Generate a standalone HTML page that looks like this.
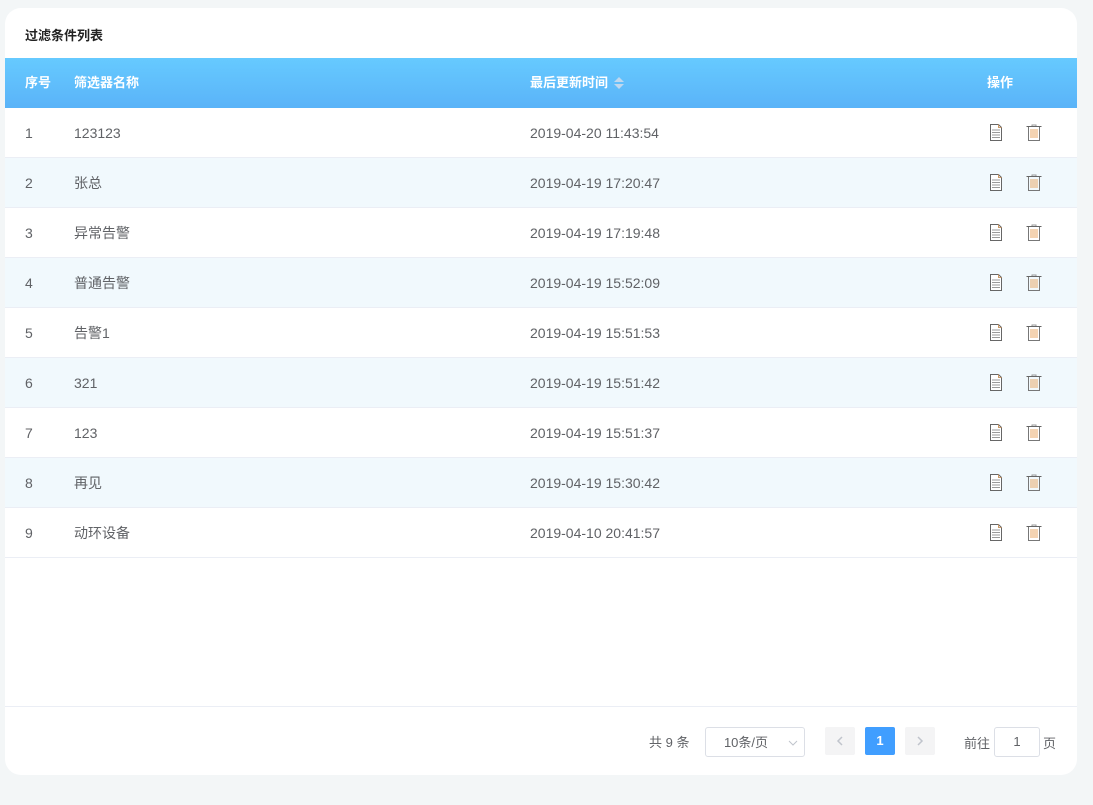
<!DOCTYPE html>
<html><head><meta charset="utf-8"><style>
*{margin:0;padding:0;box-sizing:border-box}
body{width:1093px;height:805px;background:#f3f6f7;font-family:"Liberation Sans","Noto Sans CJK SC",sans-serif;font-size:14px;color:#606266;position:relative;overflow:hidden}
.card{position:absolute;left:5px;top:8px;width:1072px;height:767px;background:#fff;border-radius:16px;overflow:hidden}
.title{position:absolute;left:20px;top:17px;font-size:13px;font-weight:bold;color:#222}
.head{position:absolute;left:0;top:50px;width:1072px;height:50px;background:linear-gradient(#66caff,#5ab3f8);color:#fff;font-weight:bold;font-size:13px}
.head span,.row span{position:absolute;top:0;line-height:50px}
.row{position:absolute;left:0;width:1072px;height:50px;border-bottom:1px solid #ebeef5}
.row.s{background:#f1f9fd}
.c1{left:20px}.c2{left:69px}.c3{left:525px}.c4{left:982px}
.ic{position:absolute;top:16px}
.sort{display:inline-block;vertical-align:middle;margin-left:6px;width:10px;height:14px;position:relative;top:-1px}
.sort:before{content:"";position:absolute;left:0;top:1px;border:5px solid transparent;border-top:0;border-bottom:5px solid #c0d8ee}
.sort:after{content:"";position:absolute;left:0;top:8px;border:5px solid transparent;border-bottom:0;border-top:5px solid #c0d8ee}
.foot{position:absolute;left:0;top:698px;width:1072px;border-top:1px solid #ebeef5}
.pg{position:absolute;font-size:13px;color:#606266}
.box{position:absolute;border:1px solid #dcdfe6;border-radius:3px;background:#fff;text-align:center;font-size:13px}
.btn{position:absolute;width:30px;height:28px;background:#f4f4f5;border-radius:2px;color:#c0c4cc;text-align:center;line-height:28px}
.btn svg{position:absolute;left:11px;top:9px}
</style></head><body>
<div class="card">
<div class="title">过滤条件列表</div>
<div class="head"><span class="c1">序号</span><span class="c2">筛选器名称</span><span class="c3">最后更新时间<i class="sort"></i></span><span class="c4">操作</span></div>
<div id="rows"></div>
<div class="foot"></div>
<div class="pg" style="left:644px;top:724px">共 9 条</div>
<div class="box" style="left:700px;top:719px;width:100px;height:30px;line-height:30px;padding-right:18px">10条/页<svg style="position:absolute;right:6px;top:12px" width="10" height="6"><path d="M1 1l4 4 4-4" fill="none" stroke="#c0c4cc"/></svg></div>
<div class="btn" style="left:820px;top:719px"><svg width="8" height="10"><path d="M6 1L2 5l4 4" fill="none" stroke="#c0c4cc" stroke-width="1.5"/></svg></div>
<div class="btn" style="left:860px;top:719px;background:#409eff;color:#fff;font-weight:bold;font-size:13px">1</div>
<div class="btn" style="left:900px;top:719px"><svg width="8" height="10"><path d="M2 1l4 4-4 4" fill="none" stroke="#c0c4cc" stroke-width="1.5"/></svg></div>
<div class="pg" style="left:959px;top:725px">前往</div>
<div class="box" style="left:989px;top:719px;width:46px;height:30px;line-height:28px">1</div>
<div class="pg" style="left:1038px;top:725px">页</div>
</div>
<script>
var d=[["1","123123","2019-04-20 11:43:54"],["2","张总","2019-04-19 17:20:47"],["3","异常告警","2019-04-19 17:19:48"],["4","普通告警","2019-04-19 15:52:09"],["5","告警1","2019-04-19 15:51:53"],["6","321","2019-04-19 15:51:42"],["7","123","2019-04-19 15:51:37"],["8","再见","2019-04-19 15:30:42"],["9","动环设备","2019-04-10 20:41:57"]];
var doc='<svg class="ic" style="left:984px" width="14" height="17"><path d="M1.5 .5h8l3 3v13h-11z" fill="#fff" stroke="#666"/><path d="M3 6h8M3 8.5h8M3 11h8M3 13.5h8" stroke="#999"/><path d="M9.5 .5v3h3" fill="none" stroke="#c96"/></svg>';
var del='<svg class="ic" style="left:1021px" width="16" height="17"><path d="M6 2.5V1h4v1.5" fill="none" stroke="#999"/><path d="M.5 2.5h15" stroke="#666"/><path d="M2.5 3v13.5h11V3" fill="none" stroke="#777"/><path d="M5 5v9M7 5v9M9 5v9M11 5v9" stroke="#e8a766"/></svg>';
var h='';d.forEach(function(r,i){h+='<div class="row'+(i%2?' s':'')+'" style="top:'+(100+i*50)+'px"><span class="c1">'+r[0]+'</span><span class="c2">'+r[1]+'</span><span class="c3">'+r[2]+'</span>'+doc+del+'</div>'});
document.getElementById('rows').innerHTML=h;
</script>
</body></html>
